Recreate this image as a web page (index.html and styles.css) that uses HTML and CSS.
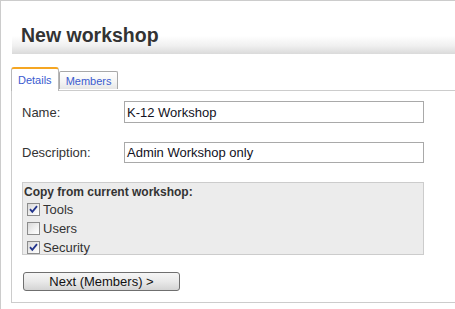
FILE: index.html
```html
<!DOCTYPE html>
<html>
<head>
<meta charset="utf-8">
<link rel="stylesheet" href="styles.css">
</head>
<body>
<div class="frame">
  <div class="header"><h1 class="title">New workshop</h1></div>
  <div class="tabs">
    <div class="tab tab-active">Details</div>
    <div class="tab">Members</div>
  </div>
  <div class="panel">
    <div class="form-row">
      <label class="label">Name:</label>
      <div class="input">K-12 Workshop</div>
    </div>
    <div class="form-row row-desc">
      <label class="label">Description:</label>
      <div class="input input-short">Admin Workshop only</div>
    </div>
    <div class="copy-box">
      <div class="copy-title">Copy from current workshop:</div>
      <div class="check-row">
        <span class="cb"><svg width="11" height="11" viewBox="0 0 11 11"><path d="M2 5.2 L4.3 7.8 L9 2.2" fill="none" stroke="#22348c" stroke-width="1.8"/></svg></span>
        <span class="check-label">Tools</span>
      </div>
      <div class="check-row">
        <span class="cb"></span>
        <span class="check-label">Users</span>
      </div>
      <div class="check-row">
        <span class="cb"><svg width="11" height="11" viewBox="0 0 11 11"><path d="M2 5.2 L4.3 7.8 L9 2.2" fill="none" stroke="#22348c" stroke-width="1.8"/></svg></span>
        <span class="check-label">Security</span>
      </div>
    </div>
    <div class="btn">Next (Members) &gt;</div>
  </div>
</div>
</body>
</html>
```

FILE: styles.css
```css
html, body {
  margin: 0;
  padding: 0;
  background: #fff;
  overflow: hidden;
  width: 455px;
  height: 309px;
}
body {
  font-family: "Liberation Sans", Arial, sans-serif;
}
.frame {
  width: 455px;
  height: 309px;
  border-top: 1px solid #cccccc;
  border-left: 1px solid #cccccc;
  box-sizing: border-box;
  padding-left: 10px;
  padding-top: 20px;
}
.header {
  margin-left: 1px;
  height: 33px;
  background: linear-gradient(to bottom, #ffffff 0%, #ffffff 45%, #f0f0f0 75%, #dadada 100%);
  display: flex;
  align-items: flex-start;
}
.title {
  margin: 0;
  padding: 2px 0 0 9px;
  font-size: 19.5px;
  font-weight: bold;
  color: #333333;
  line-height: 24px;
}
.tabs {
  margin-top: 14px;
  display: flex;
  align-items: flex-end;
  height: 22px;
  position: relative;
  z-index: 1;
}
.tab {
  font-size: 11px;
  color: #3a5bcf;
  height: 17px;
  line-height: 18px;
  padding: 0 6px;
  border: 1px solid #a8a8a8;
  border-bottom: none;
  border-radius: 2px 2px 0 0;
  background: linear-gradient(to bottom, #ffffff 0%, #f4f4f4 60%, #e6e6e6 100%);
  margin-bottom: 1px;
}
.tab-active {
  line-height: 23px;
  padding: 0 6px;
  background: #ffffff;
  border-top: 2px solid #f5a623;
  border-left: 1px solid #b8b8b8;
  border-right: 1px solid #b8b8b8;
  border-radius: 3px 3px 0 0;
  margin-bottom: -1px;
  box-sizing: border-box;
  height: 24px;
}
.panel {
  border: 1px solid #cccccc;
  border-right: none;
  height: 213px;
  box-sizing: border-box;
  padding: 10px 0 0 10px;
}
.form-row {
  display: flex;
  align-items: center;
  height: 22px;
}
.row-desc {
  margin-top: 19px;
  height: 21px;
}
.label {
  width: 102px;
  font-size: 13px;
  color: #333333;
}
.input {
  width: 300px;
  height: 100%;
  box-sizing: border-box;
  border: 1px solid #a9a9a9;
  font-size: 13px;
  color: #111122;
  padding-left: 2px;
  display: flex;
  align-items: center;
}
.copy-box {
  margin-top: 19px;
  width: 402px;
  height: 73px;
  box-sizing: border-box;
  background: #ececec;
  border: 1px solid #cccccc;
  padding: 2px 0 0 1px;
}
.copy-title {
  font-size: 12px;
  font-weight: bold;
  color: #333333;
  line-height: 15px;
}
.check-row {
  display: flex;
  align-items: center;
  height: 19px;
  padding-left: 3px;
}
.cb {
  width: 11px;
  height: 11px;
  border: 1px solid #8c8c8c;
  background: linear-gradient(135deg, #d8d8d8 0%, #f2f2f2 60%, #ffffff 100%);
  display: inline-block;
  margin-right: 3px;
}
.cb svg {
  display: block;
}
.check-label {
  font-size: 13px;
  color: #333333;
}
.btn {
  margin-top: 17px;
  margin-left: 1px;
  width: 157px;
  height: 19px;
  box-sizing: border-box;
  border: 1px solid #6f6f6f;
  border-radius: 3px;
  background: linear-gradient(to bottom, #f6f6f6 0%, #e9e9e9 50%, #d4d4d4 100%);
  font-size: 13px;
  color: #111111;
  text-align: center;
  line-height: 17px;
}
```
